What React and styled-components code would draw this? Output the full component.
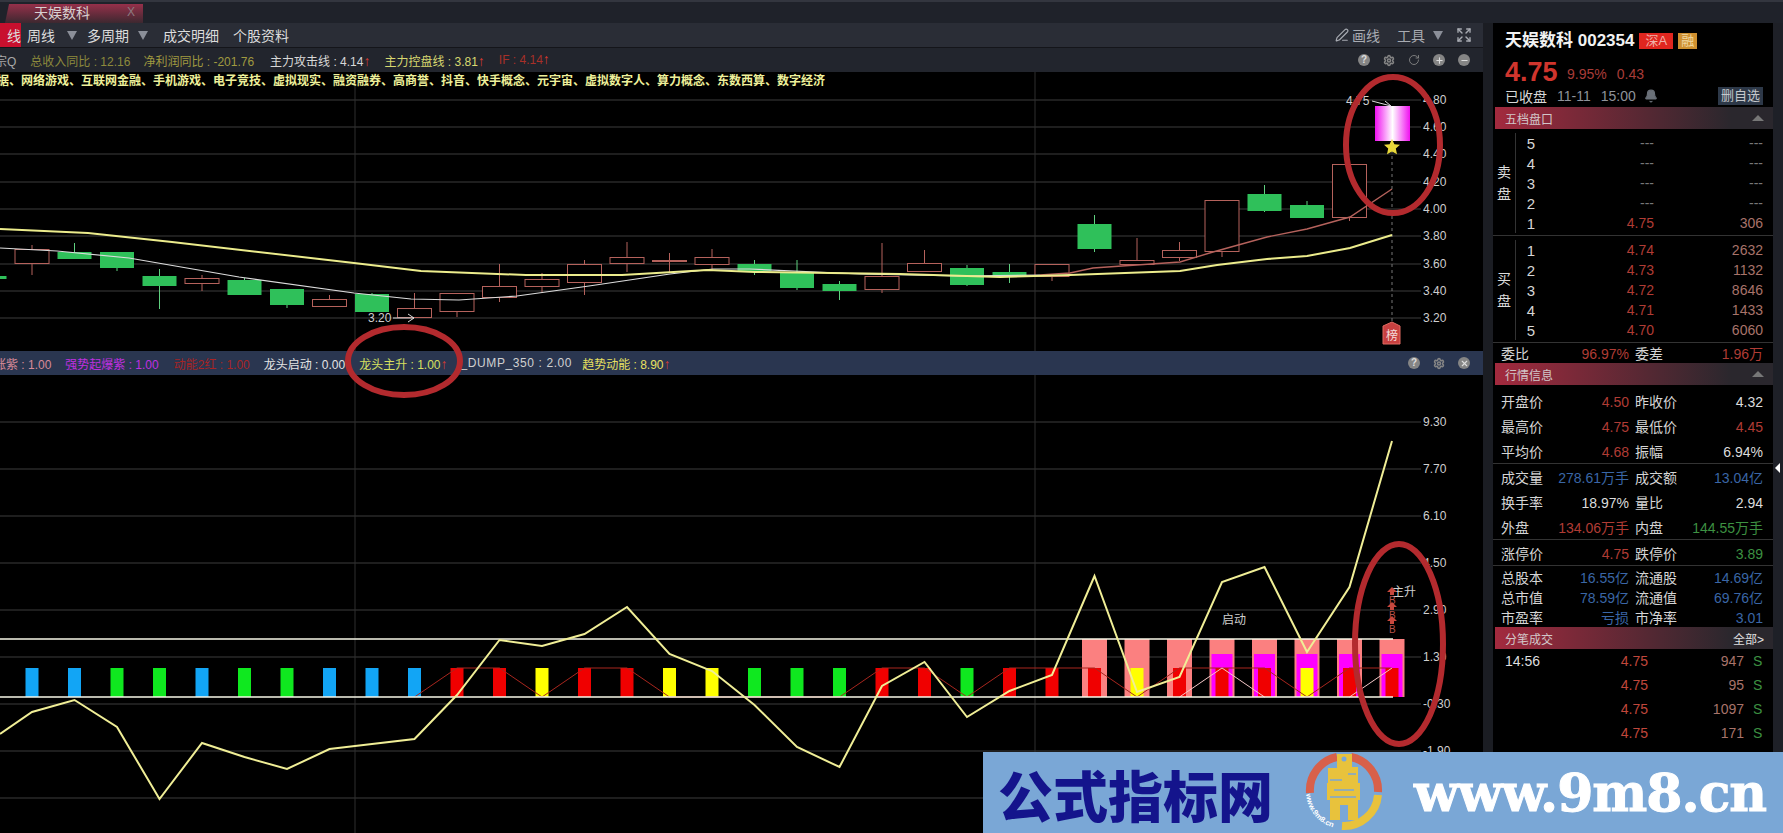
import React from "react";
import styled, { createGlobalStyle } from "styled-components";
import { PenLine, Expand, Bell, Settings, RotateCw, Plus, Minus, X } from "lucide-react";

const FONT = '"Liberation Sans", "Noto Sans CJK SC", sans-serif';
const RED = "#b03c35";
const BLUE = "#3a66a6";
const GREEN = "#3d9142";
const WHITE = "#dcdcdc";

const stepX = (i) => 32 + 42.5 * i;

// index, wick top, body top, body bottom, wick bottom, kind
const candles = [
  [-1, 276, 276, 279, 279, "down"],
  [0, 245, 249, 263, 275, "up"],
  [1, 243, 252, 259, 259, "down"],
  [2, 252, 252, 268, 271, "down"],
  [3, 269, 276, 286, 309, "down"],
  [4, 275, 278, 283, 291, "up"],
  [5, 278, 280, 295, 295, "down"],
  [6, 289, 289, 305, 308, "down"],
  [7, 295, 299, 306, 306, "up"],
  [8, 293, 294, 312, 312, "down"],
  [9, 293, 308, 317, 317, "up"],
  [10, 293, 293, 311, 317, "up"],
  [11, 264, 286, 297, 302, "up"],
  [12, 273, 279, 286, 292, "up"],
  [13, 260, 264, 282, 295, "up"],
  [14, 242, 257, 263, 272, "up"],
  [15, 253, 260, 261, 272, "up"],
  [16, 249, 257, 264, 270, "up"],
  [17, 260, 264, 271, 275, "down"],
  [18, 260, 272, 288, 290, "down"],
  [19, 281, 284, 291, 300, "down"],
  [20, 243, 276, 289, 293, "up"],
  [21, 250, 263, 271, 271, "up"],
  [22, 265, 268, 285, 286, "down"],
  [23, 264, 272, 277, 283, "down"],
  [24, 264, 264, 276, 281, "up"],
  [25, 215, 224, 249, 252, "down"],
  [26, 238, 260, 264, 264, "up"],
  [27, 242, 250, 257, 261, "up"],
  [28, 200, 200, 251, 257, "up"],
  [29, 185, 194, 211, 212, "down"],
  [30, 201, 205, 218, 218, "down"],
  [31, 164, 164, 217, 221, "up"],
];

const priceTicks = [
  ["4.80", 100], ["4.60", 127], ["4.40", 154], ["4.20", 182], ["4.00", 209],
  ["3.80", 236], ["3.60", 264], ["3.40", 291], ["3.20", 318],
];

const yellowAvg = "0,229 88,233 172,242 354,263 421,271 526,275 622,275 708,270 755,272 900,274 1000,277 1070,275 1180,271 1217,265 1267,259 1307,256 1350,248 1392,235";
const whiteAvg = "0,248 57,251 129,258 239,277 354,293 411,299 459,300 517,296 589,286 670,274 713,269 750,269 860,274 960,276 1040,275";
const redAvg = "1040,275 1070,273 1093,268 1180,262 1213,252 1267,237 1307,229 1350,217 1392,189";

const indicatorTicks = [
  ["9.30", 422], ["7.70", 469], ["6.10", 516], ["4.50", 563], ["2.90", 610],
  ["1.30", 657], ["-0.30", 704], ["-1.90", 751], ["", 798],
];

const barColors = {
  b: "#12a5f5",
  g: "#0fe81f",
  r: "#f00000",
  y: "#ffff00",
};
const barSeq = "bbggbggbbbrryrryygggrrgrrryrrryrr".split("");

const oscY = [712, 700, 727, 799, 743, 757, 769, 749, 744, 739, 695, 640, 646, 634, 607, 654, 671, 705, 747, 767, 686, 662, 717, 691, 675, 576, 692, 677, 582, 567, 652, 587, 441];
const oscPoints = "0,734 " + oscY.map((y, i) => `${stepX(i)},${y}`).join(" ");

const zigzag = barSeq
  .map((c, i) => (i < 9 ? null : `${stepX(i)},${c === "r" ? 668 : 697}`))
  .filter(Boolean)
  .join(" ");

const sellRows = [
  ["5", "---", "---"],
  ["4", "---", "---"],
  ["3", "---", "---"],
  ["2", "---", "---"],
  ["1", "4.75", "306"],
];
const buyRows = [
  ["1", "4.74", "2632"],
  ["2", "4.73", "1132"],
  ["3", "4.72", "8646"],
  ["4", "4.71", "1433"],
  ["5", "4.70", "6060"],
];

const quoteGroups = [
  {
    h: 25,
    rows: [
      ["开盘价", "4.50", RED, "昨收价", "4.32", WHITE],
      ["最高价", "4.75", RED, "最低价", "4.45", RED],
      ["平均价", "4.68", RED, "振幅", "6.94%", WHITE],
    ],
  },
  {
    h: 25,
    rows: [
      ["成交量", "278.61万手", BLUE, "成交额", "13.04亿", BLUE],
      ["换手率", "18.97%", WHITE, "量比", "2.94", WHITE],
      ["外盘", "134.06万手", RED, "内盘", "144.55万手", GREEN],
    ],
  },
  {
    h: 25,
    rows: [["涨停价", "4.75", RED, "跌停价", "3.89", GREEN]],
  },
  {
    h: 20,
    rows: [
      ["总股本", "16.55亿", BLUE, "流通股", "14.69亿", BLUE],
      ["总市值", "78.59亿", BLUE, "流通值", "69.76亿", BLUE],
      ["市盈率", "亏损", BLUE, "市净率", "3.01", BLUE],
    ],
  },
];

const ticks = [
  ["14:56", "4.75", "947"],
  ["", "4.75", "95"],
  ["", "4.75", "1097"],
  ["", "4.75", "171"],
];

const GlobalStyle = createGlobalStyle`
  html, body {
    margin: 0;
    padding: 0;
    background: #000;
    overflow: hidden;
  }
`;

const Page = styled.div`
  position: relative;
  width: 1783px;
  height: 833px;
  overflow: hidden;
  background: #000;
  color: ${WHITE};
  font-family: ${FONT};
  display: flex;
  flex-direction: column;
`;

const TabBar = styled.div`
  height: 23px;
  flex: none;
  display: flex;
  align-items: flex-end;
  padding-left: 5px;
  background: #1f222a;
  border-top: 2px solid #33363f;
  box-sizing: border-box;
`;

const Tab = styled.div`
  width: 138px;
  height: 19px;
  display: flex;
  align-items: center;
  justify-content: space-between;
  padding: 0 8px 3px 29px;
  box-sizing: border-box;
  font-size: 14px;
  color: #d8d0d0;
  background: linear-gradient(#96304a, #3d2830);
  clip-path: polygon(4px 0, 100% 0, 100% 100%, 0 100%);
  span {
    color: #8d7a80;
    font-size: 12px;
  }
`;

const Body = styled.div`
  flex: 1;
  display: flex;
  min-height: 0;
`;

const MainPane = styled.div`
  width: 1483px;
  flex: none;
  display: flex;
  flex-direction: column;
`;

const Gutter = styled.div`
  width: 10px;
  flex: none;
  background: #1b1d23;
`;

const Toolbar = styled.div`
  height: 25px;
  flex: none;
  display: flex;
  align-items: center;
  background: #2a2d36;
  border-bottom: 1px solid #14151a;
  box-sizing: border-box;
  font-size: 14px;
  color: #dcdcdc;
`;

const ActiveTab = styled.div`
  width: 21px;
  height: 100%;
  display: flex;
  align-items: center;
  justify-content: flex-end;
  background: #c8102e;
  overflow: hidden;
  white-space: nowrap;
`;

const ToolItem = styled.div`
  margin-left: ${(p) => p.$gap}px;
  white-space: nowrap;
`;

const Caret = styled.div`
  margin-left: ${(p) => p.$gap}px;
  width: 0;
  height: 0;
  border-left: 5px solid transparent;
  border-right: 5px solid transparent;
  border-top: 9px solid #8b8f99;
`;

const ToolRight = styled.div`
  margin-left: auto;
  display: flex;
  align-items: center;
  padding-right: 11px;
  color: #a8abb2;
`;

const ExpandIcon = styled(Expand)`
  margin-left: 13px;
`;

const InfoBar = styled.div`
  height: 24px;
  flex: none;
  display: flex;
  align-items: center;
  background: #22252d;
  font-size: 12px;
  white-space: nowrap;
`;

const IndicatorBar = styled(InfoBar)`
  height: 24px;
  background: #2a3650;
`;

const Stat = styled.span`
  margin-left: ${(p) => p.$left}px;
  color: ${(p) => p.$color};
  letter-spacing: ${(p) => p.$track || 0}px;
  i {
    font-style: normal;
    font-size: 14px;
    line-height: 12px;
    color: #d33a30;
  }
`;

const IconRow = styled.div`
  margin-left: auto;
  padding-right: 13px;
  display: flex;
  gap: 13px;
  align-items: center;
`;

const RoundIcon = styled.div`
  width: 12px;
  height: 12px;
  border-radius: 50%;
  background: ${(p) => (p.$plain ? "transparent" : "#858585")};
  color: ${(p) => (p.$plain ? "#858585" : "#dddddd")};
  font-size: 10px;
  font-weight: 700;
  line-height: 12px;
  display: flex;
  align-items: center;
  justify-content: center;
`;

const ChartSvg = styled.svg`
  display: block;
  flex: none;
  background: #000;
  text {
    font-family: ${FONT};
    font-size: 12px;
    fill: #cfcfcf;
  }
`;

const Headline = styled.text`
  font-size: 12px !important;
  font-weight: 700;
  fill: #eef09a !important;
`;

const BadgeGlyph = styled.text`
  font-size: 12px !important;
  fill: #f4dcdc !important;
`;

const SignalLetter = styled.text`
  font-size: 10px !important;
  fill: #b85048 !important;
`;

const SidePanel = styled.div`
  width: 280px;
  flex: none;
  background: #000;
  overflow: hidden;
  font-size: 14px;
`;

const TitleRow = styled.div`
  height: 36px;
  padding-left: 12px;
  display: flex;
  align-items: center;
  gap: 5px;
  box-sizing: border-box;
`;

const StockName = styled.div`
  font-size: 17px;
  font-weight: 700;
  color: #f2f2f2;
  line-height: 20px;
`;

const Badge = styled.div`
  height: 16px;
  padding: 0 ${(p) => p.$pad}px;
  background: ${(p) => p.$bg};
  color: ${(p) => p.$fg};
  font-size: 13px;
  line-height: 16px;
`;

const PriceRow = styled.div`
  height: 26px;
  padding-left: 12px;
  display: flex;
  align-items: center;
  color: #a83c38;
  font-size: 14px;
  strong {
    font-size: 27px;
    color: #d0352d;
    font-weight: 700;
    width: 62px;
  }
  span {
    margin-right: 10px;
    padding-top: 4px;
  }
`;

const StatusRow = styled.div`
  height: 22px;
  padding: 0 10px 0 12px;
  display: flex;
  align-items: center;
  color: #d8d8d8;
  span {
    margin-left: 10px;
    color: #8f939a;
  }
  svg {
    margin-left: 8px;
    color: #6a7078;
    fill: #6a7078;
  }
`;

const FlatButton = styled.div`
  margin-left: auto;
  width: 45px;
  height: 18px;
  background: #2d3848;
  color: #c5c8cc;
  font-size: 13px;
  line-height: 18px;
  text-align: center;
`;

const SectionHeader = styled.div`
  height: 22px;
  margin-left: 2px;
  padding: 0 9px 0 10px;
  display: flex;
  align-items: center;
  justify-content: space-between;
  background: linear-gradient(90deg, #a32a3e, #2a272d 85%);
  font-size: 12px;
  color: #d2c7c9;
  em {
    font-style: normal;
    color: #e0e0e0;
  }
`;

const Triangle = styled.div`
  width: 0;
  height: 0;
  border-left: 6px solid transparent;
  border-right: 6px solid transparent;
  border-bottom: 6px solid #777;
`;

const BookBlock = styled.div`
  display: flex;
  padding: ${(p) => p.$pad};
  border-bottom: 1px solid #333;
`;

const BookSide = styled.div`
  width: 22px;
  flex: none;
  border-right: 1px solid #333;
  display: flex;
  flex-direction: column;
  align-items: center;
  justify-content: center;
  gap: 6px;
  color: #dcdcdc;
  font-size: 14px;
  line-height: 16px;
`;

const BookRows = styled.div`
  flex: 1;
`;

const BookRow = styled.div`
  height: 20px;
  display: flex;
  align-items: center;
  padding-right: 10px;
`;

const BookLevel = styled.div`
  width: 30px;
  text-align: center;
  color: #d6d6d6;
  font-size: 15px;
`;

const BookPrice = styled.div`
  width: 108px;
  text-align: right;
  color: ${(p) => (p.$dash ? "#777" : RED)};
`;

const BookVolume = styled.div`
  flex: 1;
  text-align: right;
  color: ${(p) => (p.$dash ? "#777" : "#a8736a")};
`;

const SummaryRow = styled.div`
  height: 20px;
  display: grid;
  grid-template-columns: 128px 128px;
  column-gap: 6px;
  padding-left: 8px;
  align-items: center;
`;

const QuoteGroup = styled.div`
  padding: ${(p) => p.$pad}px 0 0;
  border-bottom: ${(p) => (p.$last ? "none" : "1px solid #333")};
`;

const QuoteRow = styled.div`
  height: ${(p) => p.$h}px;
  display: grid;
  grid-template-columns: 128px 128px;
  column-gap: 6px;
  padding-left: 8px;
  align-items: center;
`;

const Cell = styled.div`
  display: flex;
  justify-content: space-between;
  align-items: baseline;
  white-space: nowrap;
  span:first-child {
    color: #d5d5d5;
  }
  span:last-child {
    color: ${(p) => p.$color};
  }
`;

const TickRow = styled.div`
  height: 24px;
  display: flex;
  align-items: center;
  padding-left: 12px;
  font-size: 14px;
`;

const TickTime = styled.div`
  width: 60px;
  color: #dedede;
`;

const TickPrice = styled.div`
  width: 83px;
  text-align: right;
  color: #c0473c;
`;

const TickVolume = styled.div`
  width: 96px;
  text-align: right;
  color: #a8736a;
`;

const TickSide = styled.div`
  margin-left: 9px;
  color: ${GREEN};
`;

const EdgeStrip = styled.div`
  flex: 1;
  position: relative;
  background: #1e2027;
`;

const EdgeArrow = styled.div`
  position: absolute;
  left: 2px;
  top: 440px;
  width: 0;
  height: 0;
  border-top: 5px solid transparent;
  border-bottom: 5px solid transparent;
  border-right: 5px solid #fff;
`;

const Overlay = styled.svg`
  position: absolute;
  left: 0;
  top: 0;
  pointer-events: none;
`;

const Banner = styled.div`
  position: absolute;
  left: 983px;
  top: 752px;
  right: 0;
  bottom: 0;
  background: #7aa7d6;
  display: flex;
  align-items: center;
`;

const BannerTitle = styled.div`
  margin-left: 15px;
  width: 286px;
  font-family: "Noto Sans CJK SC", sans-serif;
  font-weight: 900;
  font-size: 55px;
  line-height: 60px;
  color: #14148c;
  white-space: nowrap;
`;

const BannerUrl = styled.div`
  margin-left: 30px;
  font-family: "DejaVu Serif", serif;
  font-weight: 700;
  font-size: 52px;
  letter-spacing: -1px;
  line-height: 60px;
  color: #fff;
  white-space: nowrap;
  -webkit-text-stroke: 1px #fff;
`;

const Logo = styled.svg`
  flex: none;
  margin-left: 20px;
  text {
    font-family: ${FONT};
    font-size: 7.5px;
    font-weight: 700;
    fill: #fff;
  }
`;

function Candle({ data }) {
  const [i, wt, bt, bb, wb, kind] = data;
  const x = stepX(i);
  const up = kind === "up";
  const stroke = up ? "#b5625c" : "#5fd07f";
  return (
    <g>
      <line x1={x} x2={x} y1={wt} y2={wb} stroke={stroke} />
      <rect
        x={x - 17}
        y={bt + (up ? 0.5 : 0)}
        width={34}
        height={bb - bt}
        fill={up ? "#000" : "#2fc05a"}
        stroke={up ? stroke : "none"}
      />
    </g>
  );
}

function PriceChart() {
  return (
    <ChartSvg width="1483" height="279" viewBox="0 72 1483 279">
      <defs>
        <linearGradient id="limitUp" x1="0" x2="1" y1="0" y2="0">
          <stop offset="0" stopColor="#f010f0" />
          <stop offset="0.5" stopColor="#fff" />
          <stop offset="1" stopColor="#f010f0" />
        </linearGradient>
      </defs>
      {priceTicks.map(([t, y]) => (
        <g key={t}>
          <line x1="0" x2="1421" y1={y} y2={y} stroke="#3c3c3c" />
          <text x="1423" y={y + 4}>{t}</text>
        </g>
      ))}
      <line x1="355" x2="355" y1="72" y2="351" stroke="#2e2e2e" />
      <line x1="1035" x2="1035" y1="72" y2="351" stroke="#2e2e2e" />
      <line x1="1392" x2="1392" y1="150" y2="322" stroke="#777" strokeDasharray="3 3" />
      {candles.map((c) => (
        <Candle key={c[0]} data={c} />
      ))}
      <rect x="1375" y="106" width="35" height="35" fill="url(#limitUp)" />
      <polyline points={whiteAvg} fill="none" stroke="#dcdcdc" strokeWidth="1.2" />
      <polyline points={redAvg} fill="none" stroke="#b5625c" strokeWidth="1.4" />
      <polyline points={yellowAvg} fill="none" stroke="#ecec8c" strokeWidth="2" />
      <Headline x="-3" y="85">
        据、网络游戏、互联网金融、手机游戏、电子竞技、虚拟现实、融资融券、高商誉、抖音、快手概念、元宇宙、虚拟数字人、算力概念、东数西算、数字经济
      </Headline>
      <text x="368" y="322">3.20</text>
      <path d="M393 318H414M408 314l6 4-6 4" stroke="#ddd" fill="none" />
      <text x="1346" y="105">4.75</text>
      <path d="M1372 101L1391 106M1385 101l6 5" stroke="#ddd" fill="none" />
      <path
        d="M1392 139l2.4 5.2 5.6.6-4.2 3.8 1.2 5.6-5-2.8-5 2.8 1.2-5.6-4.2-3.8 5.6-.6z"
        fill="#e8d83a"
      />
      <path d="M1383 326l9-4 8 4v18h-17z" fill="#c84040" stroke="#e06a60" />
      <BadgeGlyph x="1386" y="340">榜</BadgeGlyph>
    </ChartSvg>
  );
}

function IndicatorChart() {
  return (
    <ChartSvg width="1483" height="458" viewBox="0 375 1483 458">
      {indicatorTicks.map(([t, y]) => (
        <g key={y}>
          <line x1="0" x2="1421" y1={y} y2={y} stroke="#3c3c3c" />
          {t && <text x="1423" y={y + 4}>{t}</text>}
        </g>
      ))}
      <line x1="355" x2="355" y1="375" y2="833" stroke="#2e2e2e" />
      <line x1="1035" x2="1035" y1="375" y2="833" stroke="#2e2e2e" />
      {barSeq.map((c, i) =>
        i >= 25 ? (
          <rect key={i} x={stepX(i) - 12.5} y="639" width="25" height="58" fill="#fb8080" />
        ) : null
      )}
      {barSeq.map((c, i) =>
        i >= 28 ? (
          <rect key={i} x={stepX(i) - 10.5} y="654" width="21" height="43" fill="#ff00ff" />
        ) : null
      )}
      {barSeq.map((c, i) => (
        <rect key={i} x={stepX(i) - 6.5} y="668" width="13" height="29" fill={barColors[c]} />
      ))}
      <polyline points={zigzag} fill="none" stroke="#a8261e" />
      <polyline
        points={`${stepX(27)},697 ${stepX(28)},668 ${stepX(29)},697`}
        fill="none"
        stroke="#f4c8c8"
      />
      <polyline points={`${stepX(31)},697 ${stepX(32)},668`} fill="none" stroke="#f4c8c8" />
      <line x1="0" x2="1393" y1="639" y2="639" stroke="#f8f8e8" strokeWidth="1.6" />
      <line x1="0" x2="1393" y1="697" y2="697" stroke="#f8f8e8" strokeWidth="1.6" />
      <polyline points={oscPoints} fill="none" stroke="#f0ee96" strokeWidth="2" />
      <text x="1222" y="624">启动</text>
      <text x="1392" y="596">主升</text>
      {[592, 607, 621].map((y) => (
        <g key={y}>
          <path d={`M1392 ${y - 5}l5 5h-3v3h-4v-3h-3z`} fill="#c8483e" />
          <SignalLetter x="1389" y={y + 12}>B</SignalLetter>
        </g>
      ))}
    </ChartSvg>
  );
}

function ChartIcons({ extended }) {
  return (
    <IconRow>
      <RoundIcon>?</RoundIcon>
      <RoundIcon $plain><Settings size={13} strokeWidth={3} /></RoundIcon>
      {extended && <RoundIcon $plain><RotateCw size={12} strokeWidth={1.8} /></RoundIcon>}
      {extended && <RoundIcon><Plus size={9} strokeWidth={3} /></RoundIcon>}
      <RoundIcon>
        {extended ? <Minus size={9} strokeWidth={3} /> : <X size={9} strokeWidth={3} />}
      </RoundIcon>
    </IconRow>
  );
}

function BookRowsList({ rows }) {
  return (
    <BookRows>
      {rows.map(([lv, price, vol]) => (
        <BookRow key={lv}>
          <BookLevel>{lv}</BookLevel>
          <BookPrice $dash={price === "---"}>{price}</BookPrice>
          <BookVolume $dash={vol === "---"}>{vol}</BookVolume>
        </BookRow>
      ))}
    </BookRows>
  );
}

function Quote({ row, h }) {
  return (
    <QuoteRow $h={h}>
      <Cell $color={row[2]}>
        <span>{row[0]}</span>
        <span>{row[1]}</span>
      </Cell>
      <Cell $color={row[5]}>
        <span>{row[3]}</span>
        <span>{row[4]}</span>
      </Cell>
    </QuoteRow>
  );
}

function Side() {
  return (
    <SidePanel>
      <TitleRow>
        <StockName>天娱数科 002354</StockName>
        <Badge $bg="#e0261f" $fg="#f0b0a8" $pad={6}>深A</Badge>
        <Badge $bg="#cf9030" $fg="#f0d8a0" $pad={3}>融</Badge>
      </TitleRow>
      <PriceRow>
        <strong>4.75</strong>
        <span>9.95%</span>
        <span>0.43</span>
      </PriceRow>
      <StatusRow>
        已收盘
        <span>11-11</span>
        <span>15:00</span>
        <Bell size={14} />
        <FlatButton>删自选</FlatButton>
      </StatusRow>
      <SectionHeader>
        五档盘口
        <Triangle />
      </SectionHeader>
      <BookBlock $pad="4px 0 2px">
        <BookSide><div>卖</div><div>盘</div></BookSide>
        <BookRowsList rows={sellRows} />
      </BookBlock>
      <BookBlock $pad="4px 0 2px">
        <BookSide><div>买</div><div>盘</div></BookSide>
        <BookRowsList rows={buyRows} />
      </BookBlock>
      <SummaryRow>
        <Cell $color={RED}><span>委比</span><span>96.97%</span></Cell>
        <Cell $color={RED}><span>委差</span><span>1.96万</span></Cell>
      </SummaryRow>
      <SectionHeader>
        行情信息
        <Triangle />
      </SectionHeader>
      {quoteGroups.map((g, idx) => (
        <QuoteGroup key={idx} $pad={idx === 0 ? 3 : idx === 3 ? 1 : 0} $last={idx === 3}>
          {g.rows.map((r) => (
            <Quote key={r[0]} row={r} h={g.h} />
          ))}
        </QuoteGroup>
      ))}
      <SectionHeader>
        分笔成交
        <em>全部&gt;</em>
      </SectionHeader>
      {ticks.map(([t, p, v], i) => (
        <TickRow key={i}>
          <TickTime>{t}</TickTime>
          <TickPrice>{p}</TickPrice>
          <TickVolume>{v}</TickVolume>
          <TickSide>S</TickSide>
        </TickRow>
      ))}
    </SidePanel>
  );
}

export default function App() {
  return (
    <Page>
      <GlobalStyle />
      <TabBar>
        <Tab>
          天娱数科
          <span>X</span>
        </Tab>
      </TabBar>
      <Body>
        <MainPane>
          <Toolbar>
            <ActiveTab>线</ActiveTab>
            <ToolItem $gap={6}>周线</ToolItem>
            <Caret $gap={12} />
            <ToolItem $gap={10}>多周期</ToolItem>
            <Caret $gap={9} />
            <ToolItem $gap={15}>成交明细</ToolItem>
            <ToolItem $gap={14}>个股资料</ToolItem>
            <ToolRight>
              <PenLine size={14} />
              <ToolItem $gap={3}>画线</ToolItem>
              <ToolItem $gap={17}>工具</ToolItem>
              <Caret $gap={8} />
              <ExpandIcon size={16} />
            </ToolRight>
          </Toolbar>
          <InfoBar>
            <Stat $left={-5} $color="#a8a8a8">宗Q</Stat>
            <Stat $left={14} $color="#8d8a3c">总收入同比 : 12.16</Stat>
            <Stat $left={13} $color="#a09a40">净利润同比 : -201.76</Stat>
            <Stat $left={16} $color="#d8d8d8">主力攻击线 : 4.14<i>↑</i></Stat>
            <Stat $left={14} $color="#d8d870">主力控盘线 : 3.81<i>↑</i></Stat>
            <Stat $left={14} $color="#a83028">IF : 4.14<i>↑</i></Stat>
            <ChartIcons extended />
          </InfoBar>
          <PriceChart />
          <IndicatorBar>
            <Stat $left={-6} $color="#d88a98">涨紫 : 1.00</Stat>
            <Stat $left={14} $color="#c030e0">强势起爆紫 : 1.00</Stat>
            <Stat $left={15} $color="#a82424">动能2红 : 1.00</Stat>
            <Stat $left={14} $color="#e4e4e4">龙头启动 : 0.00</Stat>
            <Stat $left={14} $color="#d8e060">龙头主升 : 1.00<i>↑</i></Stat>
            <Stat $left={13} $color="#d0d0d0" $track={0.6}>_DUMP_350 : 2.00</Stat>
            <Stat $left={10} $color="#e8e060">趋势动能 : 8.90<i>↑</i></Stat>
            <ChartIcons />
          </IndicatorBar>
          <IndicatorChart />
        </MainPane>
        <Gutter />
        <Side />
        <EdgeStrip>
          <EdgeArrow />
        </EdgeStrip>
      </Body>
      <Overlay width="1783" height="833">
        <ellipse cx="1393" cy="145" rx="47" ry="68" fill="none" stroke="#b32a2e" strokeWidth="6" />
        <ellipse cx="404" cy="361" rx="56" ry="34" fill="none" stroke="#b32a2e" strokeWidth="6" />
        <ellipse cx="1399" cy="644" rx="44" ry="100" fill="none" stroke="#b32a2e" strokeWidth="6" />
      </Overlay>
      <Banner>
        <BannerTitle>公式指标网</BannerTitle>
        <Logo width="80" height="81" viewBox="0 0 80 81">
          <defs>
            <path id="logoArc" d="M2 42A38 38 0 0 0 31 76" />
          </defs>
          <path d="M6 41A34 34 0 0 1 33 5" fill="none" stroke="#d8604a" strokeWidth="8" />
          <path d="M47 5A34 34 0 0 1 74 40" fill="none" stroke="#d8604a" strokeWidth="8" />
          <path d="M74 43A34 34 0 0 1 38 74" fill="none" stroke="#e8c23c" strokeWidth="8" />
          <path
            d="M33 2h15v13h6v16h2v17h-2v20H44V53h-8v15H26V48h-3V31h1V16h9z"
            fill="#e8c23c"
          />
          <circle cx="40" cy="7" r="2.5" fill="#7aa7d6" />
          <path d="M26 28h12M26 45h26M44 22h8M30 38h20" stroke="#7aa7d6" strokeWidth="1.6" />
          <text>
            <textPath href="#logoArc">www.9m8.cn</textPath>
          </text>
        </Logo>
        <BannerUrl>www.9m8.cn</BannerUrl>
      </Banner>
    </Page>
  );
}
